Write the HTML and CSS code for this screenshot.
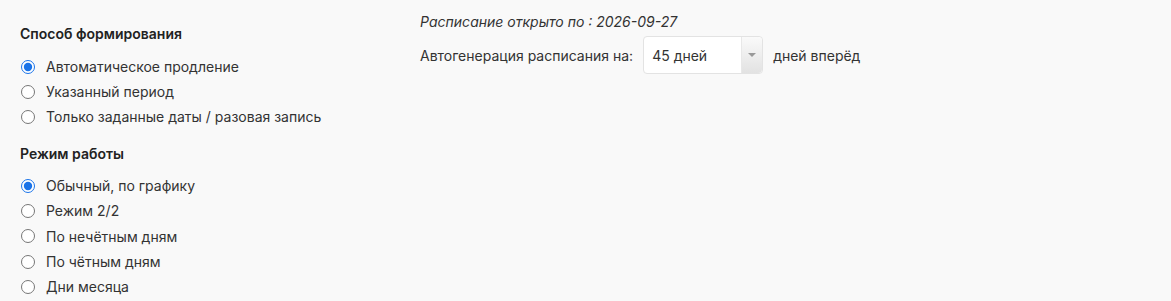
FILE: index.html
```html
<!DOCTYPE html>
<html lang="ru">
<head>
    <meta charset="UTF-8">
    <title>Расписание</title>
    <link rel="stylesheet" href="styles.css">
</head>
<body>
    <div class="settings">
        <div class="left">
            <div class="group">
                <div class="group-title">Способ формирования</div>
                <label class="radio"><input type="radio" name="mode" checked> Автоматическое продление</label>
                <label class="radio"><input type="radio" name="mode"> Указанный период</label>
                <label class="radio"><input type="radio" name="mode"> Только заданные даты / разовая запись</label>
            </div>
            <div class="group">
                <div class="group-title">Режим работы</div>
                <label class="radio"><input type="radio" name="work" checked> Обычный, по графику</label>
                <label class="radio"><input type="radio" name="work"> Режим 2/2</label>
                <label class="radio"><input type="radio" name="work"> По нечётным дням</label>
                <label class="radio"><input type="radio" name="work"> По чётным дням</label>
                <label class="radio"><input type="radio" name="work"> Дни месяца</label>
            </div>
        </div>
        <div class="right">
            <div class="open-till">Расписание открыто по : 2026-09-27</div>
            <div class="autogen">
                <span>Автогенерация расписания на:</span>
                <div class="select">
                    <span class="select-value">45 дней</span>
                    <span class="select-arrow"></span>
                </div>
                <span>дней вперёд</span>
            </div>
        </div>
    </div>
</body>
</html>
```

FILE: styles.css
```css
body {
    margin: 0;
    background-color: #f9f9f9;
    font-family: Inter, "Noto Sans", sans-serif;
    font-size: 14px;
    color: #333;
}
.settings {
    display: flex;
    padding: 13px 20px 0 20px;
}
.left {
    width: 400px;
}
.group {
    padding-top: 12px;
}
.group + .group {
    padding-top: 16px;
}
.group-title {
    font-weight: 600;
    font-size: 14px;
    line-height: 18px;
    color: #222;
    margin-bottom: 11px;
}
.group + .group .group-title {
    margin-bottom: 10px;
}
.radio {
    display: flex;
    align-items: center;
    height: 25px;
    gap: 11px;
    cursor: pointer;
}
.group + .group .radio {
    height: 25.3px;
}
.radio input {
    margin: 0 0 0 1px;
    width: 14px;
    height: 14px;
    accent-color: #1a73e8;
}
.right {
    display: flex;
    flex-direction: column;
}
.open-till {
    font-style: italic;
    line-height: 18px;
}
.autogen {
    display: flex;
    align-items: center;
    gap: 10px;
    margin-top: 5px;
}
.select {
    display: flex;
    width: 118px;
    height: 36px;
    background-color: #fff;
    border: 1px solid #e3e3e3;
    border-radius: 4px;
}
.select-value {
    flex: 1;
    display: flex;
    align-items: center;
    padding-left: 8px;
}
.select-arrow {
    width: 20px;
    border-left: 1px solid #e8e8e8;
    background: linear-gradient(#fafafa, #e2e2e2);
    border-radius: 0 4px 4px 0;
    position: relative;
}
.select-arrow::after {
    content: "";
    position: absolute;
    left: 6px;
    top: 16px;
    border-left: 4px solid transparent;
    border-right: 4px solid transparent;
    border-top: 4px solid #999;
}
```
